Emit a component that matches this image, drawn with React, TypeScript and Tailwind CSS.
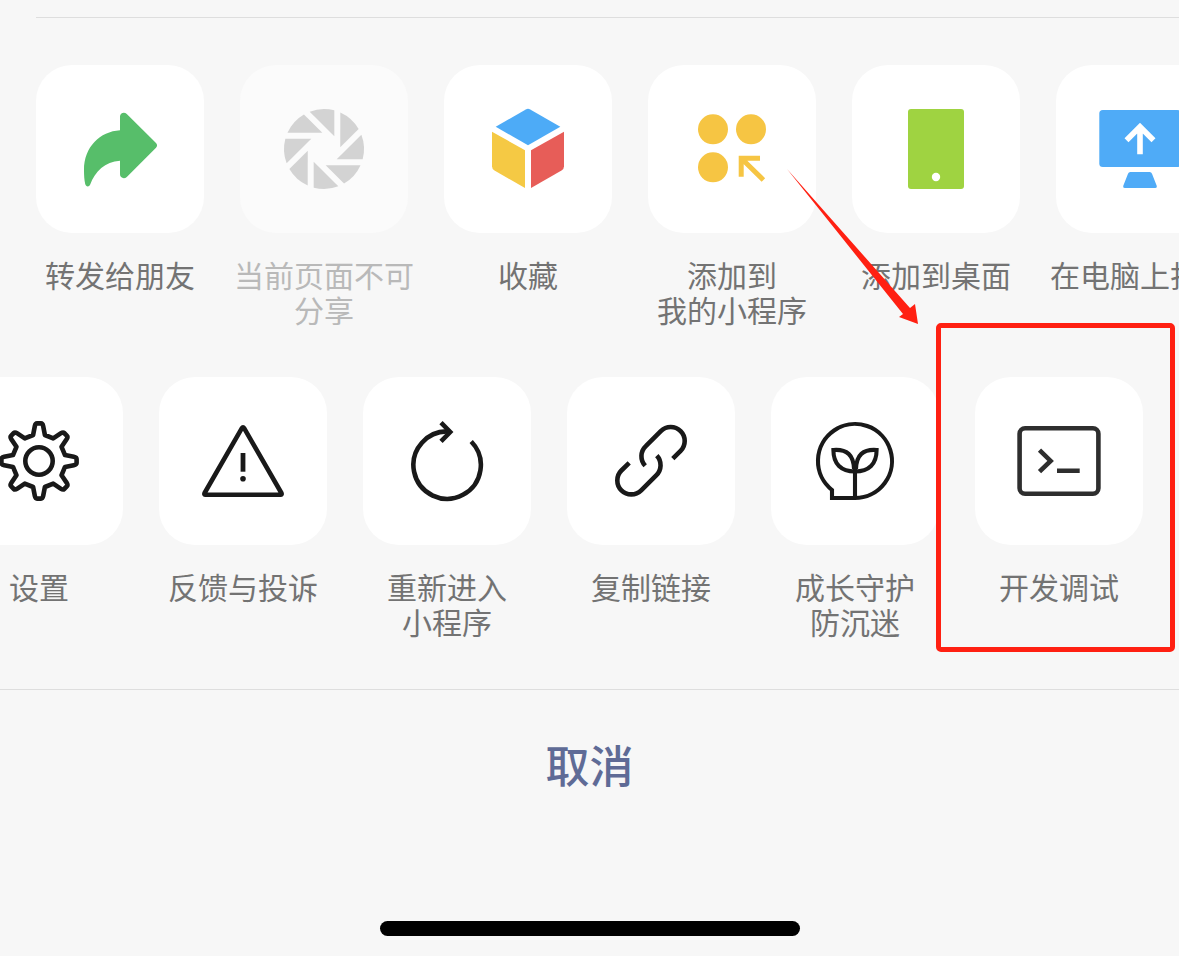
import React from "react";

type Action = {
    label: string[],
    icon: React.ReactNode,
    disabled?: boolean,
    highlighted?: boolean,
}

const BLADES = [0, 45, 90, 135, 180, 225, 270, 315]

// one tooth of the gear, pointing up, relative to the gear's centre
const TOOTH = [[-5.9, -26], [-4.2, -34.8], [-3.6, -37.6], [-2, -37.6], [2, -37.6], [3.6, -37.6], [4.2, -34.8], [5.9, -26]]

function gearPath() {
    const parts = BLADES.map((deg, i) => {
        const a = (deg * Math.PI) / 180
        const p = TOOTH.map(([x, y]) => {
            const rx = 42 + x * Math.cos(a) - y * Math.sin(a)
            const ry = 42 + x * Math.sin(a) + y * Math.cos(a)
            return `${rx.toFixed(2)} ${ry.toFixed(2)}`
        })
        return `${i === 0 ? "M" : "L"}${p[0]} L${p[1]} Q${p[2]} ${p[3]} L${p[4]} Q${p[5]} ${p[6]} L${p[7]}`
    })
    return parts.join(" ") + " Z"
}

function Icon({ children }: { children: React.ReactNode }) {
    return (
        <svg viewBox="0 0 84 84" className="size-[84px]" fill="none" aria-hidden="true">
            {children}
        </svg>
    )
}

const shareActions: Action[] = [
    {
        label: ["转发给朋友"],
        icon: (
            <Icon>
                <path fill="#57be6a" d="M42 23.3C22 24.5 6 40 6 63C6 68 6.3 73 7.2 77C8 80.2 11.2 80 12.2 77.5C17 64.5 27 54.5 42 53.7V67.3C42 71 46.2 72.4 48.8 69.9L78 40.8Q80.2 38.4 78 36L48.8 6.9C46.2 4.4 42 5.9 42 9.5Z" />
            </Icon>
        ),
    },
    {
        label: ["当前页面不可", "分享"],
        disabled: true,
        icon: (
            <Icon>
                <g transform="translate(42 42)" fill="#d3d3d3">
                    {BLADES.map((deg) => (
                        <path key={deg} transform={`rotate(${deg})`} d="M10.3 -12.7V-38.65A40 40 0 0 0 -14.3 -37.36Z" />
                    ))}
                </g>
            </Icon>
        ),
    },
    {
        label: ["收藏"],
        icon: (
            <Icon>
                <path fill="#4dabf7" d="M9.7 19.7L39.8 2.4Q42 1.2 44.2 2.4L74.3 19.7L42 38.3Z" />
                <path fill="#f5c944" d="M6 24.7L39 43.3V81L8.5 63.6Q6 62 6 59.2Z" />
                <path fill="#e75d58" d="M78 24.7L45 43.3V81L75.5 63.6Q78 62 78 59.2Z" />
            </Icon>
        ),
    },
    {
        label: ["添加到", "我的小程序"],
        icon: (
            <Icon>
                <g fill="#f6c543">
                    <circle cx="23" cy="22.3" r="15" />
                    <circle cx="61" cy="22.3" r="15" />
                    <circle cx="23" cy="60.3" r="15" />
                </g>
                <path stroke="#f6c543" strokeWidth="5" d="M70 51.2H51.2V69.7M51.2 51.2L73.4 73" />
            </Icon>
        ),
    },
    {
        label: ["添加到桌面"],
        icon: (
            <Icon>
                <rect x="14" y="2" width="56" height="80" rx="3" fill="#9fd341" />
                <circle cx="42" cy="70" r="4.2" fill="#fff" />
            </Icon>
        ),
    },
    {
        label: ["在电脑上打开"],
        icon: (
            <Icon>
                <rect x="1.3" y="3" width="81.4" height="57" rx="3.5" fill="#4fabf7" />
                <path stroke="#fff" strokeWidth="5.6" d="M28.5 33.2L42 19.7L55.5 33.2M42 20V47.3" />
                <path fill="#4fabf7" d="M32.4 65H51.6Q53.4 65 54 66.7L58.8 79Q59.3 81 57.3 81H26.7Q24.7 81 25.2 79L30 66.7Q30.6 65 32.4 65Z" />
            </Icon>
        ),
    },
]

const toolActions: Action[] = [
    {
        label: ["设置"],
        icon: (
            <Icon>
                <g stroke="#191919" strokeWidth="4.6" strokeLinejoin="round">
                    <path d={gearPath()} />
                    <circle cx="42" cy="42" r="13.7" />
                </g>
            </Icon>
        ),
    },
    {
        label: ["反馈与投诉"],
        icon: (
            <Icon>
                <path stroke="#191919" strokeWidth="4.6" strokeLinejoin="round" d="M40.9 9.2Q42 7.4 43.1 9.2L80.4 74Q81.2 75.7 79.4 75.7H4.6Q2.8 75.7 3.6 74Z" />
                <path stroke="#191919" strokeWidth="4.8" d="M42 34V52.7" />
                <circle cx="42" cy="59.7" r="2.8" fill="#191919" />
            </Icon>
        ),
    },
    {
        label: ["重新进入", "小程序"],
        icon: (
            <Icon>
                <g stroke="#191919" strokeWidth="4.6">
                    <path d="M66.2 22.5A33.7 33.7 0 1 1 45 12.5" />
                    <path d="M36 3.7L45.2 13L36 22.3" />
                </g>
            </Icon>
        ),
    },
    {
        label: ["复制链接"],
        icon: (
            <Icon>
                <g stroke="#191919" strokeWidth="4.6">
                    <path d="M63.8 39.7L71.6 31.9A14 14 0 0 0 51.8 12.1L36.8 27.1A14 14 0 0 0 36.2 46.8" />
                    <path d="M20.2 43.9L12.4 51.5A14 14 0 0 0 32.2 71.3L47.2 56.3A14 14 0 0 0 47.8 36.6" />
                </g>
            </Icon>
        ),
    },
    {
        label: ["成长守护", "防沉迷"],
        icon: (
            <Icon>
                <g stroke="#191919" strokeWidth="4.1">
                    <path d="M42 79A37 37 0 1 0 19 71V79ZM42 79V46" />
                    <path d="M42 52.5C28 52.5 20.4 45 20.4 31C34 30 40.6 36 41 50" />
                    <path d="M42 52.5C56 52.5 63.6 45 63.6 31C50 30 43.4 36 43 50" />
                </g>
            </Icon>
        ),
    },
    {
        label: ["开发调试"],
        highlighted: true,
        icon: (
            <Icon>
                <g stroke="#2e2e2e" strokeWidth="4.6">
                    <rect x="2.6" y="9.3" width="78.8" height="65.4" rx="5.5" />
                    <path d="M22.5 31.2L33.6 41.9L22.5 52.6M40 51.7H62.7" />
                </g>
            </Icon>
        ),
    },
]

function ActionButton({ action }: { action: Action }) {
    return (
        <li className="relative w-[204px] shrink-0">
            <button type="button" disabled={action.disabled} className="flex w-full flex-col items-center gap-6">
                <span className={`flex size-[168px] items-center justify-center rounded-[36px] ${action.disabled ? "bg-[#fbfbfb]" : "bg-white"}`}>
                    {action.icon}
                </span>
                <span className={`h-[71px] text-[30px] leading-[35px] font-normal whitespace-nowrap ${action.disabled ? "text-[#b9b9b9]" : "text-[#737373]"}`}>
                    {action.label.map((line) => (
                        <span key={line} className="block">{line}</span>
                    ))}
                </span>
            </button>
            {action.highlighted &&
                <div className="pointer-events-none absolute -top-[54px] -left-[21px] h-[329px] w-[239px] rounded-[5px] border-5 border-[#ff2012]">
                    <svg viewBox="0 0 131 155" className="absolute -top-[159px] -left-[154px] h-[155px] w-[131px]" aria-hidden="true">
                        <path fill="#ff2012" d="M0 0L123 139L128 135L131 155L112 148L116 145Z" />
                    </svg>
                </div>
            }
        </li>
    )
}

function App() {
    return (
        <main className="min-h-screen overflow-hidden bg-[#f7f7f7] pt-[17px] font-['Noto_Sans_CJK_SC',sans-serif]">
            <hr className="ml-9 border-[#dedede]" />
            <ul className="mt-[47px] ml-[18px] flex">
                {shareActions.map((action) => (
                    <ActionButton key={action.label[0]} action={action} />
                ))}
            </ul>
            {/* scrolled sideways, so the first item is cut off */}
            <ul className="mt-[49px] -ml-[63px] flex">
                {toolActions.map((action) => (
                    <ActionButton key={action.label[0]} action={action} />
                ))}
            </ul>
            <hr className="mt-[49px] border-[#dedede]" />
            <button type="button" className="h-[148px] w-full text-[44px] font-medium text-[#5f6b96]">
                取消
            </button>
            <div className="mx-auto mt-[83px] mb-5 h-[15px] w-[420px] rounded-full bg-black" />
        </main>
    )
}

export default App
